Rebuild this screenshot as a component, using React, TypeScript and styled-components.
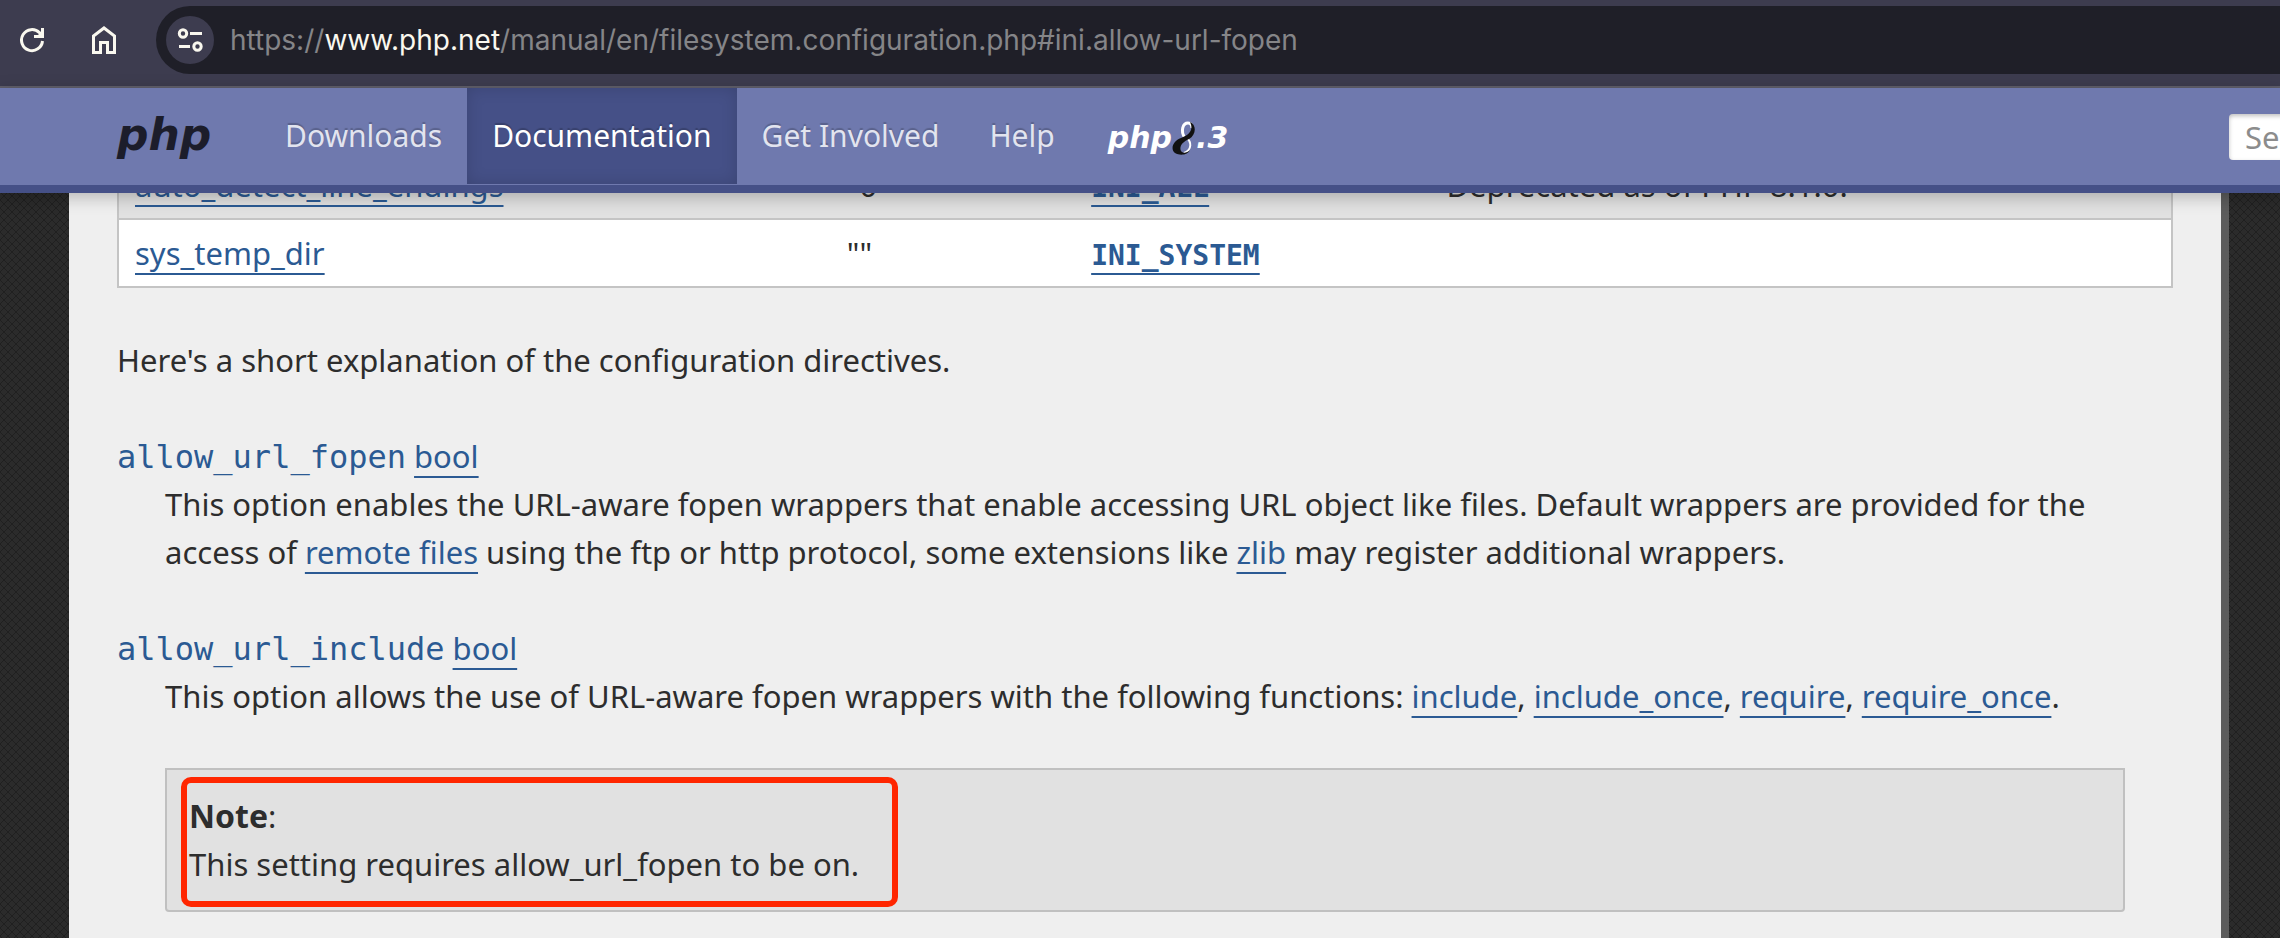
import React from "react";
import styled, { createGlobalStyle, css } from "styled-components";

const sans = `"Noto Sans", "Open Sans", sans-serif`;
const mono = `"DejaVu Sans Mono", "Liberation Mono", monospace`;
const logo = `"DejaVu Sans", sans-serif`;

const GlobalStyle = createGlobalStyle`
  * { box-sizing: border-box; }
  body {
    margin: 0;
    color: #2d2d2d;
    background-color: #2b2b2b;
    background-image:
      linear-gradient(45deg, transparent 44%, #202020 44% 56%, transparent 56%),
      linear-gradient(-45deg, transparent 44%, #202020 44% 56%, transparent 56%);
    background-size: 8px 8px;
    font: 31px/48px ${sans};
  }
`;

const BrowserBar = styled.div`
  display: flex;
  align-items: center;
  height: 88px;
  padding: 6px 0 12px 20px;
  background: #3d3c4f;
  border-bottom: 2px solid #605f6b;
`;

const ToolButton = styled.button`
  display: flex;
  flex: none;
  margin: 0 44px 0 0;
  padding: 0;
  border: 0;
  background: none;
  color: #faf8ef;
`;

const AddressBar = styled.div`
  display: flex;
  flex: 1;
  align-items: center;
  gap: 16px;
  height: 68px;
  margin-left: -4px;
  padding-left: 10px;
  border-radius: 34px 0 0 34px;
  background: #1f1f28;
`;

const SiteInfo = styled.button`
  display: flex;
  align-items: center;
  justify-content: center;
  width: 48px;
  height: 48px;
  padding: 0;
  border: 0;
  border-radius: 50%;
  background: #3d3c4f;
  color: #faf8ef;
`;

const Url = styled.span`
  color: #858588;
  font: 28px/40px Inter, sans-serif;
  white-space: nowrap;

  strong { color: #faf8ef; font-weight: 400; }
`;

const SiteHeader = styled.header`
  position: relative;
  z-index: 1;
  display: flex;
  align-items: center;
  height: 105px;
  padding-left: 117px;
  background: #6f79ae;
  border-bottom: 8px solid #455087;
  box-shadow: 0 4px 16px rgba(0, 0, 0, 0.25);
`;

const Brand = styled.a`
  width: 93px;
  margin: 0 50px 4px 0;
  color: #1c1d2b;
  font: italic 700 44px/64px ${logo};
  text-decoration: none;
`;

const Nav = styled.nav`
  display: flex;
  flex: 1;
  align-self: stretch;
`;

const NavLink = styled.a<{ $active?: boolean }>`
  display: flex;
  align-items: center;
  height: 96px;
  padding: 0 25px;
  color: #e2e4ef;
  font-size: 30px;
  text-decoration: none;
  text-shadow: 0 -2px 1px rgba(0, 0, 0, 0.2);
  white-space: nowrap;
  ${(p) =>
    p.$active &&
    css`
      color: #fff;
      background: #455087;
      box-shadow: inset 0 0 16px rgba(0, 0, 0, 0.15);
    `}
`;

const ReleaseMark = styled.a`
  display: flex;
  align-items: center;
  height: 100px;
  padding: 0 28px;
  color: #fff;
  font: italic 700 30px/48px ${logo};
  text-decoration: none;
`;

const SearchForm = styled.form`
  flex: none;
  width: 51px;
  overflow: hidden;
`;

const SearchInput = styled.input`
  display: block;
  width: 320px;
  height: 46px;
  padding: 0 16px;
  border: 0;
  border-radius: 4px;
  background: #fff;
  box-shadow: inset 0 2px 4px rgba(0, 0, 0, 0.25);
  font: 31px/46px ${sans};

  &::placeholder { color: #8c8c8c; opacity: 1; }
`;

const Page = styled.main`
  display: flow-root;
  min-height: calc(100vh - 193px);
  margin: 0 51px 0 69px;
  padding: 0 48px 24px;
  background: #efefef;
  border-right: 8px solid #5c5c5c;
`;

const DirectiveTable = styled.table`
  width: 100%;
  margin-top: -43px;
  border-collapse: collapse;
  table-layout: fixed;

  td {
    height: 68px;
    padding: 8px 16px;
    border: 0 solid #c4c4c4;
    border-width: 2px 0;
    vertical-align: middle;
  }
  td:first-child { border-left-width: 2px; }
  td:last-child { border-right-width: 2px; }
`;

const Row = styled.tr<{ $shaded?: boolean }>`
  background: ${(p) => (p.$shaded ? "#e1e1e1" : "#fff")};
`;

const TextLink = styled.a`
  color: #2b5a93;
  text-decoration: underline 2px;
  text-decoration-skip-ink: none;
  text-underline-offset: 8px;
`;

const ConstantLink = styled(TextLink)`
  font: 700 28px/34px ${mono};
`;

const Intro = styled.p`
  margin: 48px 0;
`;

const Directives = styled.dl`
  margin: 0;
`;

const Term = styled.dt`
  color: #2b5a93;
`;

const Code = styled.code`
  font: 32px/40px ${mono};
`;

const Definition = styled.dd`
  margin: 0 0 48px 48px;

  &:last-child { margin-bottom: 0; }
  p { margin: 0; }
`;

const Note = styled.blockquote`
  position: relative;
  margin: 48px 48px 0 0;
  padding: 22px;
  background: #e1e1e1;
  border: 2px solid #c0c0c0;
  border-radius: 0 0 4px 4px;

  strong { font-size: 32px; }
`;

const Highlight = styled.div`
  position: absolute;
  top: 7px;
  left: 14px;
  width: 717px;
  height: 130px;
  border: 6px solid #ff2600;
  border-radius: 10px;
`;

const ReloadIcon = () => (
  <svg width="28" height="28" viewBox="0 0 28 28" fill="none" stroke="currentColor" strokeWidth="3">
    <path d="M22.500 15A10.500 10.500 0 1 1 19.500 6.700L22 9" />
    <path d="M22.500 2V10.500H14" />
    <path d="M22 5L17 10H22Z" fill="currentColor" stroke="none" />
  </svg>
);

const HomeIcon = () => (
  <svg width="24" height="28" viewBox="0 0 24 28" fill="none" stroke="currentColor" strokeWidth="3">
    <path d="M1.500 10L12 2L22.500 10V26.500H15.500V16.500H8.500V26.500H1.500Z" />
  </svg>
);

const TuneIcon = () => (
  <svg width="26" height="26" viewBox="0 0 26 26" fill="none" stroke="currentColor" strokeWidth="3">
    <circle cx="6" cy="6.500" r="3.700" />
    <path d="M13 6.500H25M2 19.500H13" />
    <circle cx="20.500" cy="19.500" r="3.700" />
  </svg>
);

const RibbonIcon = () => (
  <svg width="24" height="34" viewBox="0 0 24 34" fill="none">
    <path d="M13 17C8 10 11 2 16 2C19 2 20 4 20 7" stroke="#fff" strokeWidth="3" />
    <path d="M14 16C20 21 20 29 12 32" stroke="#fff" strokeWidth="2" />
    <path d="M18 1C25 4 24 14 17 18C10 21 7 26 9 30C11 33 15 32 18 29C16 34 8 35 3 32C-2 28 1 20 9 17C17 14 22 9 18 1Z" fill="#111" />
  </svg>
);

export default function App() {
  return (
    <>
      <GlobalStyle />
      <BrowserBar>
        <ToolButton aria-label="Reload"><ReloadIcon /></ToolButton>
        <ToolButton aria-label="Home"><HomeIcon /></ToolButton>
        <AddressBar>
          <SiteInfo aria-label="Site information"><TuneIcon /></SiteInfo>
          <Url>https://<strong>www.php.net</strong>/manual/en/filesystem.configuration.php#ini.allow-url-fopen</Url>
        </AddressBar>
      </BrowserBar>
      <SiteHeader>
        <Brand href="#">php</Brand>
        <Nav>
          <NavLink href="#">Downloads</NavLink>
          <NavLink href="#" $active>Documentation</NavLink>
          <NavLink href="#">Get Involved</NavLink>
          <NavLink href="#">Help</NavLink>
          <ReleaseMark href="#">php<RibbonIcon />.3</ReleaseMark>
        </Nav>
        <SearchForm role="search">
          <SearchInput type="search" aria-label="Search" placeholder="Search" />
        </SearchForm>
      </SiteHeader>
      <Page>
        <DirectiveTable>
          <colgroup>
            <col style={{ width: "34.7%" }} />
            <col style={{ width: "11.9%" }} />
            <col style={{ width: "17.3%" }} />
            <col />
          </colgroup>
          <tbody>
            <Row $shaded>
              <td><TextLink href="#">auto_detect_line_endings</TextLink></td>
              <td>"0"</td>
              <td><ConstantLink href="#">INI_ALL</ConstantLink></td>
              <td>Deprecated as of PHP 8.1.0.</td>
            </Row>
            <Row>
              <td><TextLink href="#">sys_temp_dir</TextLink></td>
              <td>""</td>
              <td><ConstantLink href="#">INI_SYSTEM</ConstantLink></td>
              <td />
            </Row>
          </tbody>
        </DirectiveTable>
        <Intro>Here's a short explanation of the configuration directives.</Intro>
        <Directives>
          <Term><Code>allow_url_fopen</Code> <TextLink href="#">bool</TextLink></Term>
          <Definition>
            <p>
              This option enables the URL-aware fopen wrappers that enable accessing URL object like files. Default wrappers are provided for the
              access of <TextLink href="#">remote files</TextLink> using the ftp or http protocol, some extensions like{" "}
              <TextLink href="#">zlib</TextLink> may register additional wrappers.
            </p>
          </Definition>
          <Term><Code>allow_url_include</Code> <TextLink href="#">bool</TextLink></Term>
          <Definition>
            <p>
              This option allows the use of URL-aware fopen wrappers with the following functions:{" "}
              <TextLink href="#">include</TextLink>, <TextLink href="#">include_once</TextLink>,{" "}
              <TextLink href="#">require</TextLink>, <TextLink href="#">require_once</TextLink>.
            </p>
            <Note>
              <strong>Note</strong>:
              <p>This setting requires allow_url_fopen to be on.</p>
              <Highlight />
            </Note>
          </Definition>
        </Directives>
      </Page>
    </>
  );
}
